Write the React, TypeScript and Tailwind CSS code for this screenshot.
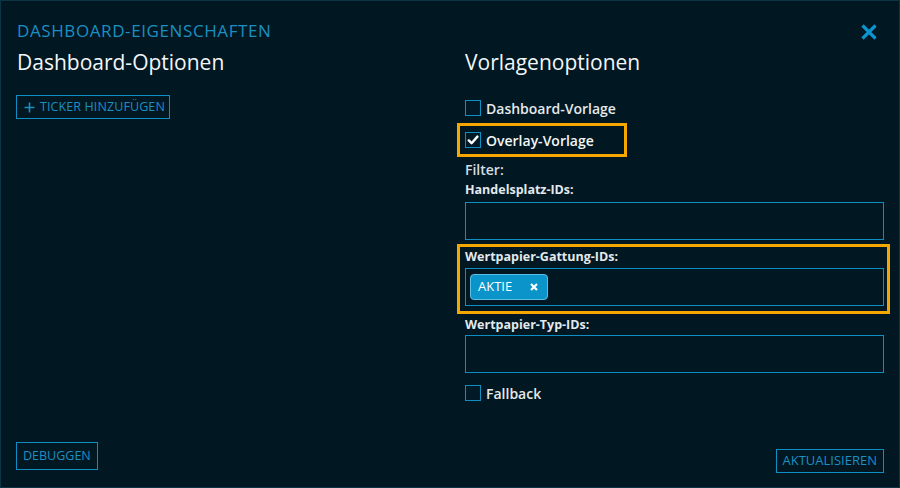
import React from 'react';

const Checkbox: React.FC<{ checked?: boolean }> = ({ checked }) => (
  <span className="w-[16px] h-[16px] border border-[#0d8fc4] bg-[#011a27] flex items-center justify-center flex-shrink-0">
    {checked && (
      <svg width="12" height="12" viewBox="0 0 12 12">
        <path d="M1.8 6.4 L4.6 9.2 L10.4 2.6" fill="none" stroke="#ffffff" strokeWidth="2.4" strokeLinecap="round" strokeLinejoin="round" />
      </svg>
    )}
  </span>
);

const FieldBox: React.FC<{ children?: React.ReactNode }> = ({ children }) => (
  <div className="h-[38px] border border-[#0d8fc4] flex items-center px-[4px]">{children}</div>
);

export default function App() {
  return (
    <div
      className="w-[900px] h-[488px] bg-[#011722] border border-[#0b3446] text-white flex flex-col pl-[16px] pr-[15px] pt-[17px] pb-[15px] overflow-hidden"
      style={{ fontFamily: '"Open Sans", "Noto Sans", sans-serif' }}
    >
      {/* header */}
      <div className="flex items-start justify-between h-[25px]">
        <div className="text-[17px] leading-[25px] text-[#1b8fc2] tracking-[0.6px]">DASHBOARD-EIGENSCHAFTEN</div>
        <svg width="18" height="18" viewBox="0 0 18 18" className="mt-[5px] mr-[6px]">
          <path d="M2.5 2.5 L15.5 15.5 M15.5 2.5 L2.5 15.5" stroke="#0d94cc" strokeWidth="3.2" />
        </svg>
      </div>

      <div className="flex flex-1">
        {/* left column */}
        <div className="w-[448px] flex flex-col">
          <h2 className="text-[21px] leading-[28px] mt-[5px] text-[#f2f6f8]">Dashboard-Optionen</h2>
          <button className="mt-[19px] -ml-[1px] self-start h-[24px] border border-[#0d8fc4] text-[#1b8fc2] text-[12.5px] tracking-[0.1px] pl-[7px] pr-[4px] flex items-center gap-[5px]">
            <svg width="11" height="11" viewBox="0 0 11 11">
              <path d="M5.5 0.5 V10.5 M0.5 5.5 H10.5" stroke="#1b8fc2" strokeWidth="1.6" />
            </svg>
            TICKER HINZUFÜGEN
          </button>
          <div className="flex-1" />
          <button className="self-start -ml-[1px] h-[28px] border border-[#0d8fc4] text-[#1b8fc2] text-[12.5px] px-[6px] mb-[2px]">
            DEBUGGEN
          </button>
        </div>

        {/* right column */}
        <div className="flex-1 flex flex-col">
          <h2 className="text-[21px] leading-[28px] mt-[5px] text-[#f2f6f8]">Vorlagenoptionen</h2>

          <label className="mt-[23px] flex items-center gap-[5px] h-[18px] text-[14px] font-semibold text-[#e4e9ec]">
            <Checkbox />
            Dashboard-Vorlage
          </label>

          <div className="mt-[6px] -ml-[8px] w-[170px] h-[34px] border-[3px] border-[#f5a700] flex items-center pl-[5px]">
            <label className="flex items-center gap-[5px] text-[14px] font-semibold text-[#f2f6f8]">
              <Checkbox checked />
              Overlay-Vorlage
            </label>
          </div>

          <div className="mt-[3px] text-[14px] leading-[20px] font-semibold text-[#d6dde1]">Filter:</div>

          <div className="mt-[1px] text-[12.5px] leading-[18px] font-bold text-[#e4e9ec]">Handelsplatz-IDs:</div>
          <div className="mt-[3px]">
            <FieldBox />
          </div>

          <div className="mt-[4px] -ml-[8px] -mr-[6px] border-[3px] border-[#f5a700] pl-[5px] pr-[3px] pt-[1px] pb-[5px]">
            <div className="text-[12.5px] leading-[17px] font-bold text-[#e4e9ec]">Wertpapier-Gattung-IDs:</div>
            <div className="mt-[3px]">
              <FieldBox>
                <span className="h-[26px] w-[78px] rounded-[4px] bg-[#0a94c9] border border-[#5bbfe3] flex items-center justify-between pl-[7px] pr-[9px] text-[13px] text-white">
                  AKTIE
                  <svg width="8" height="8" viewBox="0 0 8 8">
                    <path d="M1 1 L7 7 M7 1 L1 7" stroke="#ffffff" strokeWidth="2.2" />
                  </svg>
                </span>
              </FieldBox>
            </div>
          </div>

          <div className="mt-[2px] text-[12.5px] leading-[18px] font-bold text-[#e4e9ec]">Wertpapier-Typ-IDs:</div>
          <div className="mt-[1px]">
            <FieldBox />
          </div>

          <label className="mt-[11px] flex items-center gap-[5px] h-[18px] text-[14px] font-semibold text-[#e4e9ec]">
            <Checkbox />
            Fallback
          </label>

          <div className="flex-1" />
          <button className="self-end h-[24px] border border-[#0d8fc4] text-[#1b8fc2] text-[13px] px-[6px] -mb-[1px]">
            AKTUALISIEREN
          </button>
        </div>
      </div>
    </div>
  );
}
